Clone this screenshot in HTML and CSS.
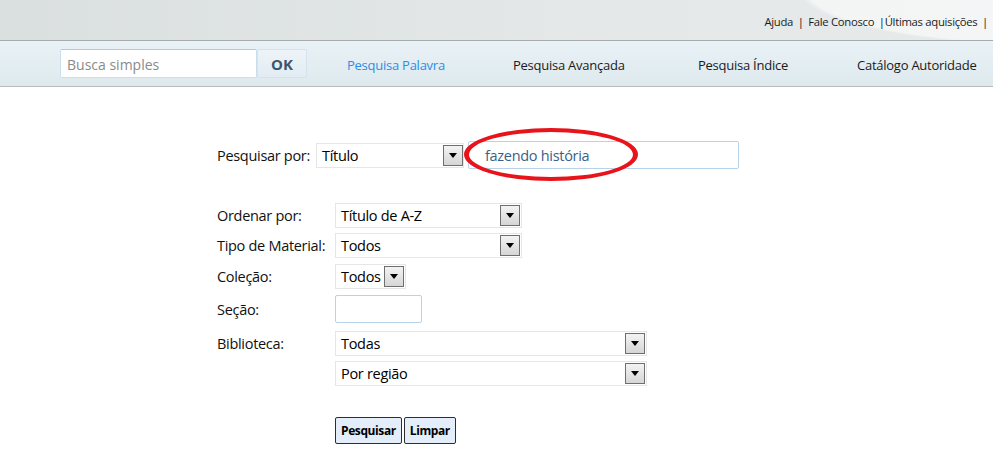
FILE: index.html
```html
<!DOCTYPE html>
<html lang="pt">
<head>
  <meta charset="UTF-8">
  <title>Busca</title>
  <link rel="stylesheet" href="styles.css">
</head>
<body>

  <div class="topo">
    <div class="links-topo">
      <a href="#">Ajuda</a> <span class="sep">|</span> <a href="#">Fale Conosco</a> <span class="sep sep-junto">|</span><a href="#">Últimas aquisições</a> <span class="sep">|</span>
    </div>
  </div>

  <div class="menu">
    <div class="busca-simples">
      <input type="text" class="campo-busca" placeholder="Busca simples">
      <button class="btn-ok">OK</button>
    </div>
    <a href="#" class="menu-item ativo">Pesquisa Palavra</a>
    <a href="#" class="menu-item">Pesquisa Avançada</a>
    <a href="#" class="menu-item">Pesquisa Índice</a>
    <a href="#" class="menu-item">Catálogo Autoridade</a>
  </div>

  <div class="formulario">
    <div class="linha-principal">
      <span class="rotulo-principal">Pesquisar por:</span>
      <div class="select sel-titulo"><span>Título</span><span class="seta"></span></div>
      <div class="termo">
        <input type="text" class="campo-termo" value="fazendo história">
        <div class="marca"></div>
      </div>
    </div>

    <div class="linha l1">
      <span class="rotulo">Ordenar por:</span>
      <div class="select sel-medio"><span>Título de A-Z</span><span class="seta"></span></div>
    </div>
    <div class="linha l2">
      <span class="rotulo">Tipo de Material:</span>
      <div class="select sel-medio"><span>Todos</span><span class="seta"></span></div>
    </div>
    <div class="linha l3">
      <span class="rotulo">Coleção:</span>
      <div class="select sel-curto"><span>Todos</span><span class="seta"></span></div>
    </div>
    <div class="linha l4">
      <span class="rotulo">Seção:</span>
      <input type="text" class="campo-secao">
    </div>
    <div class="linha l5">
      <span class="rotulo">Biblioteca:</span>
      <div class="select sel-longo"><span>Todas</span><span class="seta"></span></div>
    </div>
    <div class="linha l6">
      <span class="rotulo"></span>
      <div class="select sel-longo"><span>Por região</span><span class="seta"></span></div>
    </div>

    <div class="botoes">
      <button class="btn">Pesquisar</button>
      <button class="btn">Limpar</button>
    </div>
  </div>

</body>
</html>
```

FILE: styles.css
```css
body {
  margin: 0;
  font-family: "Open Sans", "Noto Sans", sans-serif;
  background-color: #ffffff;
  color: #111;
}
.topo {
  height: 40px;
  border-bottom: 1px solid #a9acad;
  background:
    radial-gradient(ellipse 420px 90px at 1060px -10px, rgba(255,255,255,0.55) 60%, rgba(255,255,255,0) 62%),
    linear-gradient(to right, #dadfe0, #e4e8e9 60%, #e6eaeb);
  display: flex;
  justify-content: flex-end;
  align-items: center;
}
.links-topo {
  font-size: 11.3px;
  padding-top: 3px;
  padding-right: 3px;
  letter-spacing: -0.3px;
  white-space: nowrap;
}
.links-topo a {
  color: #1c1c1c;
  text-decoration: none;
}
.sep {
  margin: 0 2px;
}
.sep-junto {
  margin-right: 0;
}
.menu {
  height: 45px;
  border-bottom: 1px solid #b9bcbd;
  background: linear-gradient(to bottom, #e9f2f6, #dee9ee);
  display: flex;
  align-items: center;
  padding-left: 60px;
}
.busca-simples {
  display: flex;
  margin-right: 40px;
  flex-shrink: 0;
}
.campo-busca {
  width: 197px;
  height: 29px;
  box-sizing: border-box;
  border: 1px solid #c9dff0;
  border-top-color: #a9c9e6;
  border-radius: 2px;
  padding: 2px 6px 0;
  font-family: inherit;
  font-size: 14px;
  outline: none;
}
.campo-busca::placeholder {
  color: #8a8a8a;
}
.btn-ok {
  width: 50px;
  height: 29px;
  border: 1px solid #d2e2ee;
  border-radius: 2px;
  background: linear-gradient(to bottom, #eef4f8, #e2ecf3);
  color: #3b566e;
  font-family: inherit;
  font-weight: bold;
  font-size: 15px;
  padding: 0;
}
.menu-item {
  color: #1a1a1a;
  text-decoration: none;
  font-size: 13px;
  letter-spacing: -0.25px;
  white-space: nowrap;
  flex-shrink: 0;
  padding-top: 2px;
}
.menu-item:nth-of-type(1) { width: 166px; }
.menu-item:nth-of-type(2) { width: 185px; }
.menu-item:nth-of-type(3) { width: 159px; }
.menu-item.ativo {
  color: #2a8ee6;
}
.formulario {
  padding-left: 217px;
  padding-top: 54px;
  font-size: 14.5px;
  letter-spacing: -0.3px;
}
.linha-principal {
  display: flex;
  align-items: center;
  height: 28px;
  margin-bottom: 34px;
}
.rotulo-principal {
  width: 99px;
  flex-shrink: 0;
}
.rotulo {
  width: 118px;
  flex-shrink: 0;
  white-space: nowrap;
}
.linha {
  display: flex;
  align-items: center;
}
.l1 { height: 25px; margin-bottom: 5px; }
.l2 { height: 25px; margin-bottom: 6px; }
.l3 { height: 25px; margin-bottom: 6px; }
.l4 { height: 28px; margin-bottom: 8px; }
.l5 { height: 25px; margin-bottom: 5px; }
.l6 { height: 25px; }
.select {
  height: 25px;
  box-sizing: border-box;
  border: 1px solid #e6e6e6;
  background: #fff;
  display: flex;
  align-items: center;
  justify-content: space-between;
  padding-left: 5px;
  padding-right: 1px;
  color: #000;
  white-space: nowrap;
}
.sel-titulo { width: 148px; padding-right: 0; }
.sel-medio { width: 187px; }
.sel-curto { width: 71px; }
.sel-longo { width: 312px; }
.seta {
  width: 20px;
  height: 21px;
  box-sizing: border-box;
  border: 1px solid #6f6f6f;
  background: linear-gradient(to bottom, #f3f3f3, #d6d6d6);
  position: relative;
  flex-shrink: 0;
}
.seta::after {
  content: "";
  position: absolute;
  left: 5px;
  top: 7px;
  border-left: 4px solid transparent;
  border-right: 4px solid transparent;
  border-top: 5px solid #000;
}
.termo {
  position: relative;
  margin-left: 4px;
}
.campo-termo {
  width: 271px;
  height: 28px;
  box-sizing: border-box;
  border: 1px solid #b7d3ec;
  border-radius: 2px;
  padding: 0 0 0 16px;
  font-family: inherit;
  font-size: 14.5px;
  letter-spacing: -0.3px;
  color: #3b5f85;
  outline: none;
}
.marca {
  position: absolute;
  left: -4px;
  top: -13px;
  width: 174px;
  height: 53px;
  box-sizing: border-box;
  border: 4px solid #e8141c;
  border-left-width: 5px;
  border-right-width: 5px;
  border-radius: 50%;
  pointer-events: none;
}
.campo-secao {
  width: 87px;
  height: 28px;
  box-sizing: border-box;
  border: 1px solid #b7d3ec;
  border-radius: 2px;
  outline: none;
}
.botoes {
  display: flex;
  gap: 2px;
  margin-left: 118px;
  margin-top: 31px;
}
.btn {
  height: 27px;
  border: 1px solid #2e2e2e;
  border-radius: 2px;
  background: #e4eefa;
  font-family: inherit;
  font-weight: bold;
  font-size: 12px;
  letter-spacing: -0.4px;
  padding: 0 5px;
  color: #000;
}
```
